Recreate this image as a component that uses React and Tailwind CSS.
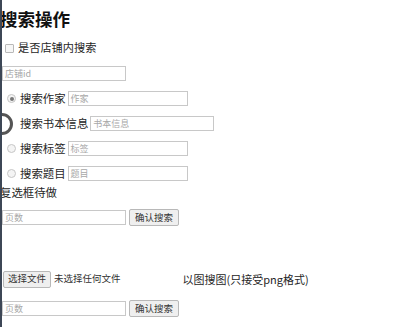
import React from "react";

const font = { fontFamily: '"Noto Sans CJK SC", "Liberation Sans", sans-serif' };

function Input({ w, ph }) {
  return (
    <div
      className={`h-[15px] border border-[#c8c8c8] bg-white flex items-center pl-[2px] text-[9px] leading-none text-[#a8a8a8] ${w}`}
    >
      {ph}
    </div>
  );
}

function Btn({ children, cls = "" }) {
  return (
    <div
      className={`h-[17px] border border-[#b8b8b8] rounded-[2px] bg-[#efefef] flex items-center justify-center text-[9.5px] leading-none text-[#333] ${cls}`}
    >
      {children}
    </div>
  );
}

function Radio({ checked, hidden }) {
  return (
    <div
      className={`w-[9px] h-[9px] rounded-full border border-[#c6c6c6] bg-[#f4f4f4] flex items-center justify-center ${hidden ? "invisible" : ""}`}
    >
      {checked && <div className="w-[4px] h-[4px] rounded-full bg-[#777]" />}
    </div>
  );
}

function RadioRow({ label, ph, checked, w, hidden }) {
  return (
    <div className="h-[25px] flex items-center">
      <div className="w-[18px] flex justify-center pl-[1px]">
        <Radio checked={checked} hidden={hidden} />
      </div>
      <span className="text-[11.4px] leading-none text-[#262626] mr-[2px]">{label}</span>
      <Input w={w} ph={ph} />
    </div>
  );
}

export default function App() {
  return (
    <div
      className="relative w-[414px] h-[327px] bg-white border-l-2 border-[#3d4756] overflow-hidden"
      style={font}
    >
      <div className="flex flex-col">
        <div className="h-[36px] flex items-center pt-[1px]">
          <span className="text-[17.5px] font-bold leading-none text-[#111] -ml-[2px]">搜索操作</span>
        </div>
        <div className="h-[24px] flex items-center">
          <div className="ml-[3px] w-[9px] h-[9px] border border-[#b8b8b8] bg-[#f6f6f6] rounded-[1px]" />
          <span className="ml-[4px] text-[11.2px] leading-none text-[#262626]">是否店铺内搜索</span>
        </div>
        <div className="h-[26px] flex items-center pt-[1px]">
          <Input w="w-[124px]" ph="店铺id" />
        </div>
        <div>
          <RadioRow label="搜索作家" ph="作家" checked w="w-[120px]" />
          <RadioRow label="搜索书本信息" ph="书本信息" w="w-[124px]" hidden />
          <RadioRow label="搜索标签" ph="标签" w="w-[120px]" />
          <RadioRow label="搜索题目" ph="题目" w="w-[120px]" />
        </div>
        <div className="h-[14px] flex items-center">
          <span className="text-[11.4px] leading-none text-[#262626] -ml-[2px]">复选框待做</span>
        </div>
        <div className="h-[9px]" />
        <div className="flex items-center gap-[3px]">
          <Input w="w-[124px]" ph="页数" />
          <Btn cls="w-[50px]">确认搜索</Btn>
        </div>
        <div className="h-[44px]" />
        <div className="h-[18px] flex items-center">
          <Btn cls="ml-[1px] w-[48px]">选择文件</Btn>
          <span className="ml-[3px] text-[9.5px] leading-none text-[#333]">未选择任何文件</span>
          <span className="ml-[62px] text-[11px] leading-none text-[#262626]">以图搜图(只接受png格式)</span>
        </div>
        <div className="h-[12px]" />
        <div className="flex items-center gap-[3px]">
          <Input w="w-[124px]" ph="页数" />
          <Btn cls="w-[50px]">确认搜索</Btn>
        </div>
      </div>
      <div className="absolute left-[-11px] top-[113px] w-[22px] h-[22px] rounded-full border-[3px] border-[#555] bg-white" />
    </div>
  );
}
